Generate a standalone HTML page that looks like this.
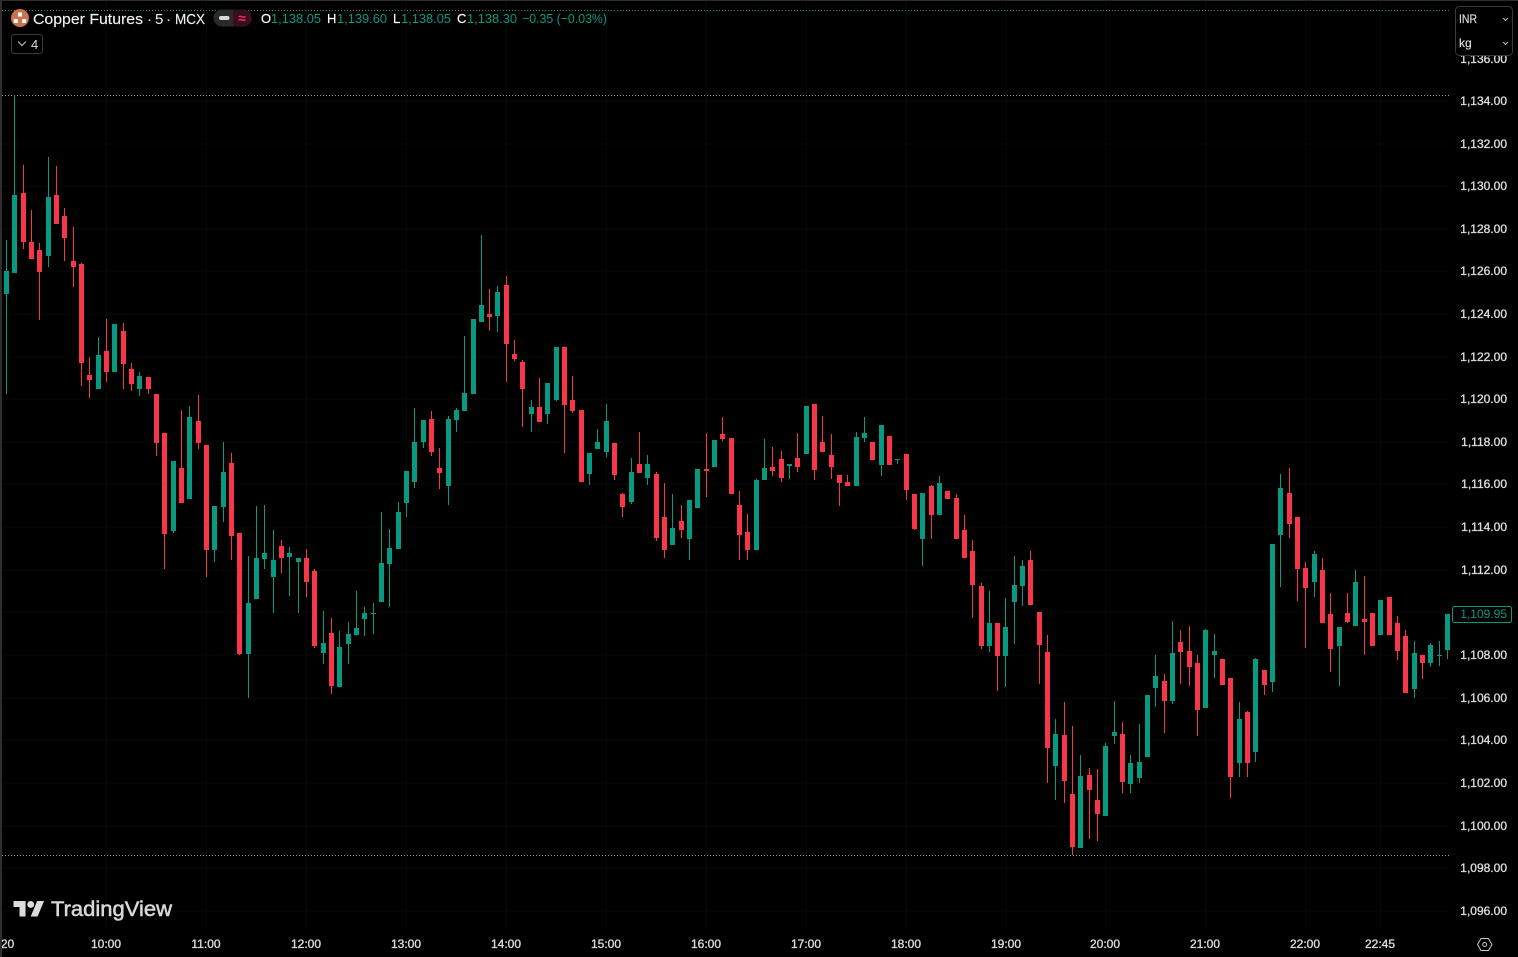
<!DOCTYPE html>
<html><head><meta charset="utf-8"><title>Copper Futures</title>
<style>
html,body{margin:0;padding:0;background:#000;width:1518px;height:957px;overflow:hidden}
svg{display:block;position:absolute;left:0;top:0}
text{font-family:"Liberation Sans",sans-serif}
.p text{font-size:12px;fill:#dcdcdc;text-anchor:end;stroke:#dcdcdc;stroke-width:.35px}
.t text{font-size:12px;fill:#dcdcdc;text-anchor:middle;stroke:#dcdcdc;stroke-width:.35px}
.o text{font-size:13px}
.w{fill:#fff;stroke:#fff;stroke-width:.2px}
.g{fill:#089981}
</style></head><body>
<svg width="1518" height="957" viewBox="0 0 1518 957">
<rect width="1518" height="957" fill="#000"/>
<g stroke="#080808" stroke-width="1" shape-rendering="crispEdges">
<path d="M2 101H1450M2 144H1450M2 186H1450M2 229H1450M2 271H1450M2 314H1450M2 357H1450M2 399H1450M2 442H1450M2 484H1450M2 527H1450M2 570H1450M2 612H1450M2 655H1450M2 698H1450M2 740H1450M2 783H1450M2 826H1450M2 868H1450M2 911H1450"/>
<path d="M106.500 0V930M206.500 0V930M306.500 0V930M406.500 0V930M506.500 0V930M606.500 0V930M706.500 0V930M806.500 0V930M906.500 0V930M1006.500 0V930M1105.500 0V930M1205.500 0V930M1305.500 0V930M1380.500 0V930"/>
</g>
<g shape-rendering="crispEdges" fill="none" stroke-width="1">
<path d="M2 10.500H1450" stroke="#089981" stroke-dasharray="1 2"/>
<path d="M2 95.500H1450" stroke="#a0a0a0" stroke-dasharray="1 2"/>
<path d="M2 855.500H1450" stroke="#a0a0a0" stroke-dasharray="1 2"/>
</g>
<g shape-rendering="crispEdges" fill="none">
<path stroke="#089981" stroke-width="1" d="M6.500 240V394M14.500 95V273M48.500 157V267M98.500 337V389M139.500 372V396M173.500 461V533M189.500 406V499M214.500 506V562M223.500 442V522M248.500 556V698M256.500 506V599M264.500 505V569M273.500 530V613M289.500 547V596M298.500 558V613M323.500 611V664M339.500 631V687M348.500 622V664M356.500 591V635M364.500 607V636M373.500 603V634M381.500 512V602M389.500 529V607M398.500 502V549M406.500 471V517M414.500 408V488M423.500 420V448M448.500 416V505M456.500 408V432M464.500 336V411M481.500 235V322M497.500 286V332M531.500 400V432M547.500 383V424M556.500 347V401M589.500 453V485M597.500 429V449M606.500 404V457M631.500 458V504M647.500 455V485M672.500 494V545M689.500 500V560M756.500 479V550M764.500 439V480M789.500 464V479M856.500 432V486M864.500 417V442M881.500 425V476M897.500 459V464M922.500 493V566M939.500 476V515M989.500 591V652M1005.500 598V687M1014.500 556V644M1022.500 560V606M1055.500 719V800M1080.500 755V848M1105.500 743V816M1114.500 701V744M1130.500 755V793M1139.500 724V783M1155.500 655V707M1172.500 621V704M1205.500 629V708M1214.500 634V678M1239.500 702V777M1255.500 658V762M1272.500 544V692M1280.500 474V587M1314.500 551V597M1339.500 627V686M1355.500 570V626M1414.500 641V698M1430.500 643V667M1439.500 641V666M1447.500 614V659"/>
<path stroke="#089981" stroke-width="5" d="M6.500 271V294M14.500 195V273M48.500 197V256M98.500 355V389M114.500 324V372M139.500 376V389M173.500 461V531M189.500 417V499M214.500 506V550M223.500 472V507M248.500 603V654M256.500 558V599M264.500 553V559M273.500 560V577M289.500 553V557M298.500 558V562M323.500 643V653M339.500 647V687M348.500 634V644M356.500 628V635M364.500 613V619M373.500 613V614M381.500 563V602M389.500 548V564M398.500 512V549M406.500 471V503M414.500 442V482M423.500 420V442M448.500 419V486M456.500 410V420M464.500 393V411M473.500 319V394M481.500 305V322M497.500 292V316M531.500 407V414M547.500 383V414M556.500 347V400M589.500 453V474M597.500 442V449M606.500 421V452M631.500 472V502M647.500 464V478M672.500 528V545M689.500 500V539M697.500 469V508M714.500 440V467M756.500 480V550M764.500 468V480M789.500 464V466M806.500 406V454M856.500 437V486M864.500 433V438M881.500 425V465M897.500 459V460M922.500 493V539M939.500 483V515M989.500 623V646M1005.500 627V656M1014.500 585V602M1022.500 566V586M1055.500 734V766M1080.500 776V848M1105.500 746V816M1114.500 732V736M1130.500 763V784M1139.500 762V778M1147.500 695V757M1155.500 676V688M1172.500 653V701M1205.500 630V708M1214.500 651V655M1239.500 719V763M1255.500 659V752M1272.500 544V682M1280.500 488V535M1314.500 554V582M1339.500 627V646M1355.500 582V626M1380.500 600V635M1414.500 653V689M1430.500 645V663M1439.500 655V656M1447.500 614V650"/>
<path stroke="#f7364a" stroke-width="1" d="M23.500 165V249M31.500 210V259M39.500 243V320M56.500 166V224M64.500 208V261M73.500 227V287M81.500 263V386M89.500 357V398M106.500 319V382M123.500 323V389M131.500 363V391M148.500 377V394M156.500 394V456M164.500 433V569M181.500 410V503M198.500 395V449M206.500 445V577M231.500 453V560M239.500 533V655M281.500 540V573M306.500 549V597M314.500 569V648M331.500 618V694M431.500 411V456M439.500 448V489M489.500 289V331M506.500 276V382M514.500 340V361M522.500 360V427M539.500 378V422M564.500 347V453M572.500 376V413M614.500 443V480M622.500 493V517M639.500 432V473M656.500 472V541M664.500 483V558M681.500 505V538M706.500 433V497M722.500 417V441M739.500 491V560M747.500 514V560M772.500 447V476M781.500 451V482M797.500 433V472M814.500 404V480M822.500 416V452M831.500 434V479M839.500 475V506M847.500 475V486M906.500 454V500M914.500 494V530M931.500 485V539M956.500 494V539M964.500 515V558M972.500 540V618M981.500 583V649M997.500 623V691M1030.500 551V605M1039.500 612V684M1047.500 635V783M1064.500 702V803M1072.500 726V855M1089.500 768V839M1097.500 769V841M1122.500 722V793M1164.500 674V733M1180.500 630V684M1189.500 626V686M1197.500 655V736M1230.500 678V798M1247.500 711V777M1264.500 670V695M1289.500 468V538M1297.500 517V601M1305.500 562V648M1322.500 558V623M1330.500 593V672M1347.500 593V623M1364.500 576V655M1397.500 616V660M1405.500 630V693M1422.500 655V679"/>
<path stroke="#f7364a" stroke-width="5" d="M23.500 193V242M31.500 242V259M39.500 250V272M56.500 195V224M64.500 216V238M73.500 261V267M81.500 264V363M89.500 375V380M106.500 351V372M123.500 331V364M131.500 369V384M148.500 377V389M156.500 394V443M164.500 433V534M181.500 468V503M198.500 421V443M206.500 445V550M231.500 463V536M239.500 533V654M281.500 546V558M306.500 558V582M314.500 571V646M331.500 633V686M431.500 419V452M439.500 468V473M489.500 314V317M506.500 285V344M514.500 354V359M522.500 362V389M539.500 407V422M564.500 347V405M572.500 400V411M581.500 410V482M614.500 443V475M622.500 494V507M639.500 464V473M656.500 474V538M664.500 517V550M681.500 521V530M706.500 469V471M722.500 434V439M731.500 438V494M739.500 505V535M747.500 532V550M772.500 467V471M781.500 459V478M797.500 458V467M814.500 404V470M822.500 442V452M831.500 455V467M839.500 475V483M847.500 482V486M872.500 442V460M889.500 436V465M906.500 454V490M914.500 494V529M931.500 486V515M947.500 491V499M956.500 498V539M964.500 530V558M972.500 551V585M981.500 586V646M997.500 623V656M1030.500 560V605M1039.500 612V645M1047.500 652V748M1064.500 735V781M1072.500 794V847M1089.500 775V790M1097.500 800V814M1122.500 734V782M1164.500 681V701M1180.500 642V652M1189.500 651V667M1197.500 663V710M1222.500 659V685M1230.500 678V777M1247.500 712V763M1264.500 670V685M1289.500 493V524M1297.500 517V569M1305.500 568V588M1322.500 570V623M1330.500 614V649M1347.500 613V622M1364.500 619V622M1372.500 613V646M1389.500 597V635M1397.500 623V651M1405.500 636V693M1422.500 655V663"/>
</g>
<g class="p">
<text x="1507" y="63">1,136.00</text>
<text x="1507" y="105">1,134.00</text><text x="1507" y="148">1,132.00</text><text x="1507" y="190">1,130.00</text><text x="1507" y="233">1,128.00</text><text x="1507" y="275">1,126.00</text><text x="1507" y="318">1,124.00</text><text x="1507" y="361">1,122.00</text><text x="1507" y="403">1,120.00</text><text x="1507" y="446">1,118.00</text><text x="1507" y="488">1,116.00</text><text x="1507" y="531">1,114.00</text><text x="1507" y="574">1,112.00</text><text x="1507" y="659">1,108.00</text><text x="1507" y="702">1,106.00</text><text x="1507" y="744">1,104.00</text><text x="1507" y="787">1,102.00</text><text x="1507" y="830">1,100.00</text><text x="1507" y="872">1,098.00</text><text x="1507" y="915">1,096.00</text>
</g>
<rect x="1452.500" y="606.500" width="59" height="16" rx="2" fill="#000" stroke="#089981"/>
<text x="1507" y="618" font-size="12" fill="#089981" text-anchor="end">1,109.95</text>
<rect x="1455.500" y="6.500" width="57" height="49" rx="4" fill="#000" stroke="#3a3a3a"/>
<text x="1459" y="23" font-size="12" fill="#dcdcdc" stroke="#dcdcdc" stroke-width=".2" textLength="18" lengthAdjust="spacingAndGlyphs">INR</text>
<text x="1459" y="47" font-size="12" fill="#dcdcdc" stroke="#dcdcdc" stroke-width=".2">kg</text>
<path d="M1503 18l2.500 2.500 2.500-2.500M1503 42l2.500 2.500 2.500-2.500" fill="none" stroke="#bbb" stroke-width="1"/>
<g class="t">
<text x="7.500" y="948">20</text><text x="106" y="948">10:00</text><text x="206" y="948">11:00</text><text x="306" y="948">12:00</text><text x="406" y="948">13:00</text><text x="506" y="948">14:00</text><text x="606" y="948">15:00</text><text x="706" y="948">16:00</text><text x="806" y="948">17:00</text><text x="906" y="948">18:00</text><text x="1006" y="948">19:00</text><text x="1105" y="948">20:00</text><text x="1205" y="948">21:00</text><text x="1305" y="948">22:00</text><text x="1380" y="948">22:45</text>
</g>
<path d="M1477.500 944.500l3.500-6h7.500l3.500 6-3.500 6h-7.500z" fill="none" stroke="#c8c8c8"/>
<circle cx="1484.700" cy="944.500" r="2" fill="none" stroke="#c8c8c8"/>
<g transform="translate(13.500 897.600) scale(.86)" fill="#dcdcdc">
<path d="M14 22H7V11H0V4h14v18zM28 22h-8l7.500-18h8L28 22z"/><circle cx="20" cy="8" r="4"/>
</g>
<text x="51" y="916" font-size="21.600" fill="#d8d8d8" stroke="#d8d8d8" stroke-width=".55" textLength="121" lengthAdjust="spacingAndGlyphs">TradingView</text>
<circle cx="20" cy="18" r="9" fill="#c8734c"/>
<path d="M18 12.500h4v4h-4zM13.800 19h4v4h-4zM22.200 19h4v4h-4z" fill="#fff"/>
<text x="33" y="24" font-size="15" fill="#f0f0f0" stroke="#f0f0f0" stroke-width=".15" textLength="110" lengthAdjust="spacingAndGlyphs">Copper Futures</text>
<text x="147" y="24" font-size="15" fill="#f0f0f0">·</text>
<text x="155" y="24" font-size="15" fill="#f0f0f0">5</text>
<text x="166" y="24" font-size="15" fill="#f0f0f0">·</text>
<text x="175" y="24" font-size="15" fill="#f0f0f0" stroke="#f0f0f0" stroke-width=".15" textLength="30" lengthAdjust="spacingAndGlyphs">MCX</text>
<path d="M222 9.500h11v17h-11a8.500 8.500 0 0 1 0-17z" fill="#2a2a2a"/>
<path d="M233 9.500h10.500a8.500 8.500 0 0 1 0 17H233z" fill="#37101c"/>
<rect x="219" y="16" width="10.500" height="4" rx="2" fill="#d8d8d8"/>
<text x="242" y="23" font-size="14" font-weight="700" fill="#f7296b" text-anchor="middle">≈</text>
<g class="o">
<text x="261" y="23" class="w">O</text><text x="271" y="23" class="g" textLength="50" lengthAdjust="spacingAndGlyphs">1,138.05</text>
<text x="327" y="23" class="w">H</text><text x="337" y="23" class="g" textLength="50" lengthAdjust="spacingAndGlyphs">1,139.60</text>
<text x="393" y="23" class="w">L</text><text x="401" y="23" class="g" textLength="50" lengthAdjust="spacingAndGlyphs">1,138.05</text>
<text x="457" y="23" class="w">C</text><text x="467" y="23" class="g" textLength="50" lengthAdjust="spacingAndGlyphs">1,138.30</text>
<text x="522" y="23" class="g" textLength="85" lengthAdjust="spacingAndGlyphs">−0.35 (−0.03%)</text>
</g>
<rect x="11.500" y="34.500" width="31" height="19" rx="3" fill="none" stroke="#3c3c3c"/>
<path d="M18 41.500l4 4 4-4" fill="none" stroke="#c8c8c8"/>
<text x="31" y="49" font-size="13" fill="#d8d8d8">4</text>
<rect x="0" y="0" width="2" height="957" fill="#2e2e2e"/>
<rect x="0" y="0" width="1518" height="1" fill="#2e2e2e"/>
</svg>
</body></html>
